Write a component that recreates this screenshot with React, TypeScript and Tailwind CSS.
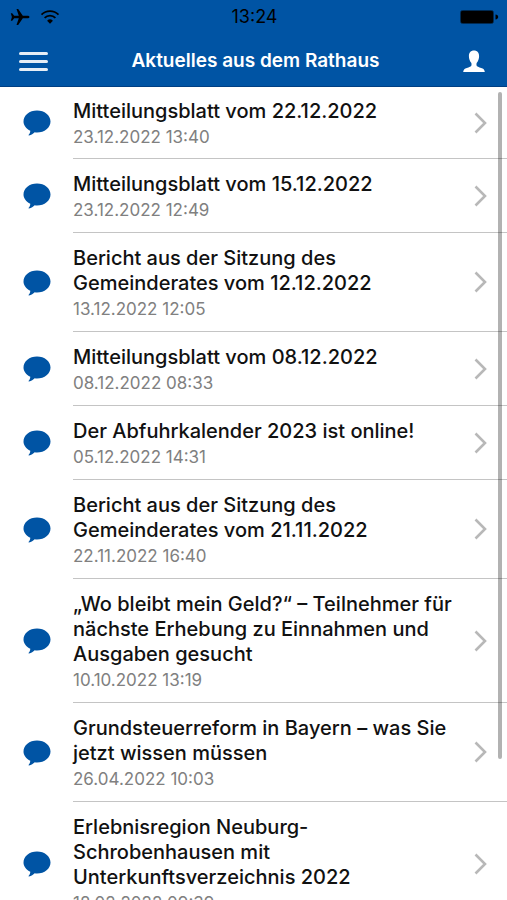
type NewsItem = { title: string; date: string };

const news: NewsItem[] = [
  { title: "Mitteilungsblatt vom 22.12.2022", date: "23.12.2022 13:40" },
  { title: "Mitteilungsblatt vom 15.12.2022", date: "23.12.2022 12:49" },
  { title: "Bericht aus der Sitzung des Gemeinderates vom 12.12.2022", date: "13.12.2022 12:05" },
  { title: "Mitteilungsblatt vom 08.12.2022", date: "08.12.2022 08:33" },
  { title: "Der Abfuhrkalender 2023 ist online!", date: "05.12.2022 14:31" },
  { title: "Bericht aus der Sitzung des Gemeinderates vom 21.11.2022", date: "22.11.2022 16:40" },
  {
    title: "„Wo bleibt mein Geld?“ – Teilnehmer für nächste Erhebung zu Einnahmen und Ausgaben gesucht",
    date: "10.10.2022 13:19",
  },
  { title: "Grundsteuerreform in Bayern – was Sie jetzt wissen müssen", date: "26.04.2022 10:03" },
  {
    title: "Erlebnisregion Neuburg-Schrobenhausen mit Unterkunftsverzeichnis 2022",
    date: "18.02.2022 09:39",
  },
];

function PlaneIcon() {
  return (
    <svg width="20" height="18" viewBox="0 0 20 18" fill="#000" aria-hidden="true">
      <path d="M19.5 9c0 .8-1 1.300-2.200 1.300h-4.500L8.200 17H6.500l2.300-6.700H4.200L2.200 12.800H.8L1.900 9 .8 5.200h1.400l2 2.500h4.600L6.500 1h1.700l4.600 6.700h4.500c1.200 0 2.200.5 2.200 1.300z" />
    </svg>
  );
}

function WifiIcon() {
  return (
    <svg width="20" height="16" viewBox="0 0 20 16" fill="none" stroke="#000" strokeWidth="1.800" aria-hidden="true">
      <path d="M1.500 5.600a12 12 0 0 1 17 0" />
      <path d="M4.600 8.900a7.600 7.600 0 0 1 10.800 0" />
      <path d="M10 14.800l-2.900-3a4.100 4.100 0 0 1 5.800 0z" fill="#000" stroke="none" />
    </svg>
  );
}

function BatteryIcon() {
  return (
    <svg width="39" height="16" viewBox="0 0 39 16" fill="#000" aria-hidden="true">
      <rect x="1" y="2" width="32" height="12" rx="1" />
      <rect x="0.500" y="1.500" width="33" height="13" rx="2" fill="none" stroke="#000" strokeOpacity="0.500" />
      <path d="M35.500 5.500c1.700.3 2.700 1.200 2.700 2.500s-1 2.200-2.700 2.500z" />
    </svg>
  );
}

function PersonIcon() {
  return (
    <svg width="22" height="23" viewBox="0 0 22 23" fill="#fff" aria-hidden="true">
      <path d="M11 .5c3.200 0 5.100 2.200 5.100 5.500 0 2.700-.9 5.200-2.300 6.700-.5.600-.5 2.900.2 3.500 1.100.9 3.900 1.400 5.600 2.300 1.300.7 2.100 1.900 2.200 3.500H.2c.1-1.600.9-2.800 2.200-3.500 1.700-.9 4.500-1.400 5.600-2.300.7-.6.7-2.900.2-3.500C6.800 11.200 5.900 8.700 5.900 6 5.900 2.700 7.800.5 11 .5z" />
    </svg>
  );
}

function BubbleIcon() {
  return (
    <svg width="28" height="26" viewBox="0 0 28 26" fill="#0054a4" aria-hidden="true">
      <path d="M14 .5c7.600 0 13.500 4.800 13.500 11S21.600 22.500 14 22.500c-.8 0-1.600-.1-2.300-.2-1.500 1.500-3.400 2.700-5.700 3.100-.5.100-.6-.4-.3-.7 1-1.100 1.500-2.400 1.600-4C3.200 18.800.5 15.400.5 11.500.5 5.300 6.400.5 14 .5z" />
    </svg>
  );
}

function ChevronIcon() {
  return (
    <svg width="13" height="22" viewBox="0 0 13 22" fill="none" stroke="#b8b8b8" strokeWidth="2.600" aria-hidden="true">
      <path d="M1.500 1.500l9.500 9.500-9.500 9.500" />
    </svg>
  );
}

function NewsRow({ item }: { item: NewsItem }) {
  return (
    <li className="group">
      <a href="#" className="flex">
        <span className="flex w-[73px] shrink-0 items-center pl-[23px]">
          <BubbleIcon />
        </span>
        <span className="flex min-w-0 flex-1 items-center border-b border-[#c4c4c4] pr-5">
          <span className="min-w-0 flex-1 pt-[13px] pr-4 pb-3 group-first:pt-3 group-first:pb-[11px]">
            <span className="block text-[20px] leading-[25px] font-medium text-[#111]">{item.title}</span>
            <span className="block pt-[3px] text-[17px] leading-5 text-[#808080]">{item.date}</span>
          </span>
          <ChevronIcon />
        </span>
      </a>
    </li>
  );
}

export default function App() {
  return (
    <div className="flex h-screen flex-col overflow-hidden bg-white font-['Inter','Liberation_Sans',sans-serif]">
      <header className="shrink-0 border-b border-[#003f83] bg-[#0054a4]">
        <div className="grid h-[34px] grid-cols-3 items-center pl-2.5 pr-2 text-black">
          <div className="flex items-center gap-2.5">
            <PlaneIcon />
            <WifiIcon />
          </div>
          <time className="text-center text-[18px] leading-5">13:24</time>
          <div className="flex justify-end">
            <BatteryIcon />
          </div>
        </div>
        <div className="flex h-[52px] items-center justify-between pt-0.5 pl-[19px] pr-[22px]">
          <button type="button" aria-label="Menü" className="flex w-[29px] flex-col gap-[5px]">
            <span className="h-[3px] w-full rounded-full bg-white/90" />
            <span className="h-[3px] w-full rounded-full bg-white/90" />
            <span className="h-[3px] w-full rounded-full bg-white/90" />
          </button>
          <h1 className="text-[19px] leading-6 font-semibold text-white">Aktuelles aus dem Rathaus</h1>
          <button type="button" aria-label="Profil">
            <PersonIcon />
          </button>
        </div>
      </header>
      <main className="relative min-h-0 flex-1">
        <ul className="h-full overflow-y-auto [scrollbar-width:none]">
          {news.map((item) => (
            <NewsRow key={item.title} item={item} />
          ))}
        </ul>
        <div className="absolute top-[5px] right-[5px] h-[82%] w-1 rounded-full bg-black/30" />
      </main>
    </div>
  );
}
